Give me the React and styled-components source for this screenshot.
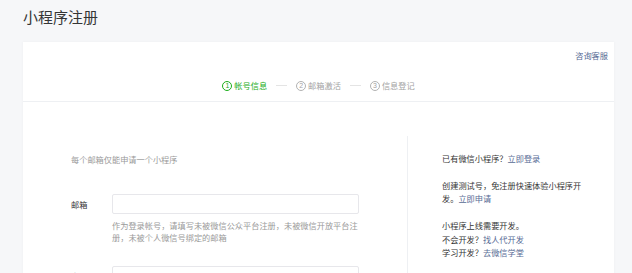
import React from "react";
import styled, { createGlobalStyle } from "styled-components";

const GlobalStyle = createGlobalStyle`
  html, body {
    margin: 0;
    padding: 0;
    background: #f6f7f9;
    font-family: "Noto Sans CJK SC", "Noto Sans", sans-serif;
    color: #353535;
  }
`;

const steps = [
  { num: "1", label: "帐号信息", active: true },
  { num: "2", label: "邮箱激活" },
  { num: "3", label: "信息登记" },
];

function App() {
  return (
    <Page>
      <GlobalStyle />
      <Title>小程序注册</Title>
      <Card>
        <CardHeader>
          <TopBar>
            <Link href="#">咨询客服</Link>
          </TopBar>
          <Steps>
            {steps.map((s, i) => (
              <React.Fragment key={s.num}>
                {i > 0 && <StepLine />}
                <Step $active={s.active}>
                  <StepNum $active={s.active}>{s.num}</StepNum>
                  {s.label}
                </Step>
              </React.Fragment>
            ))}
          </Steps>
        </CardHeader>
        <CardBody>
          <FormColumn>
            <Tip>每个邮箱仅能申请一个小程序</Tip>
            <FormRow>
              <Label>邮箱</Label>
              <Field>
                <Input />
                <Hint>
                  作为登录帐号，请填写未被微信公众平台注册，未被微信开放平台注册，未被个人微信号绑定的邮箱
                </Hint>
              </Field>
            </FormRow>
            <FormRow>
              <Label>密码</Label>
              <Field>
                <Input type="password" />
              </Field>
            </FormRow>
          </FormColumn>
          <SideColumn>
            <Para>
              已有微信小程序？<Link href="#">立即登录</Link>
            </Para>
            <Para>
              创建测试号，免注册快速体验小程序开发。<Link href="#">立即申请</Link>
            </Para>
            <Para>
              小程序上线需要开发。
              <br />
              不会开发？<Link href="#">找人代开发</Link>
              <br />
              学习开发？<Link href="#">去微信学堂</Link>
            </Para>
          </SideColumn>
        </CardBody>
      </Card>
    </Page>
  );
}

export default App;

const Page = styled.div`
  padding: 0 18px 0 23px;
  height: 273px;
  overflow: hidden;
`;

const Title = styled.h1`
  margin: 0;
  padding: 7px 0 15px;
  font-size: 15px;
  line-height: 20px;
  font-weight: 400;
  color: #353535;
`;

const Card = styled.div`
  background: #fff;
  box-shadow: 0 0 3px rgba(0, 0, 0, 0.04);
  min-height: 300px;
`;

const CardHeader = styled.div`
  height: 59px;
  border-bottom: 1px solid #eef0f3;
`;

const TopBar = styled.div`
  display: flex;
  justify-content: flex-end;
  padding: 7px 6px 0 0;
  font-size: 8.2px;
  line-height: 13px;
`;

const Link = styled.a`
  color: #576b95;
  text-decoration: none;
`;

const Steps = styled.div`
  display: flex;
  justify-content: center;
  align-items: center;
  margin-top: 17px;
  font-size: 8.2px;
  line-height: 13px;
`;

const Step = styled.div`
  display: flex;
  align-items: center;
  gap: 2px;
  color: ${(p) => (p.$active ? "#1aad19" : "#a3a3a3")};
`;

const StepNum = styled.span`
  box-sizing: border-box;
  width: 10px;
  height: 10px;
  border-radius: 50%;
  border: 0.8px solid ${(p) => (p.$active ? "#1aad19" : "#b2b2b2")};
  display: flex;
  align-items: center;
  justify-content: center;
  font-family: "Liberation Sans", sans-serif;
  font-size: 7px;
  line-height: 1;
`;

const StepLine = styled.span`
  width: 11px;
  height: 1px;
  background: #e4e4e4;
  margin: 0 9px;
`;

const CardBody = styled.div`
  display: flex;
  padding-top: 34px;
`;

const FormColumn = styled.div`
  box-sizing: border-box;
  width: 385px;
  padding: 16px 0 0 48px;
  border-right: 1px solid #eef0f3;
  min-height: 200px;
`;

const Tip = styled.div`
  font-size: 8.2px;
  line-height: 14px;
  color: #9a9a9a;
`;

const FormRow = styled.div`
  display: grid;
  grid-template-columns: 41px 247px;
  margin-top: 28px;

  & + & {
    margin-top: 23px;
  }
`;

const Label = styled.div`
  font-size: 8.2px;
  line-height: 20px;
  color: #353535;
`;

const Field = styled.div`
  display: flex;
  flex-direction: column;
`;

const Input = styled.input`
  box-sizing: border-box;
  width: 247px;
  height: 20px;
  margin: 0;
  padding: 0 6px;
  border: 1px solid #e7e7eb;
  border-radius: 2px;
  outline: none;
  background: #fff;
`;

const Hint = styled.div`
  margin-top: 5px;
  font-size: 8.2px;
  line-height: 12px;
  color: #9a9a9a;
`;

const SideColumn = styled.div`
  width: 142px;
  padding: 16px 0 0 34px;
  font-size: 8.2px;
  line-height: 13.4px;
  color: #353535;
`;

const Para = styled.p`
  margin: 0 0 13.5px;
`;
